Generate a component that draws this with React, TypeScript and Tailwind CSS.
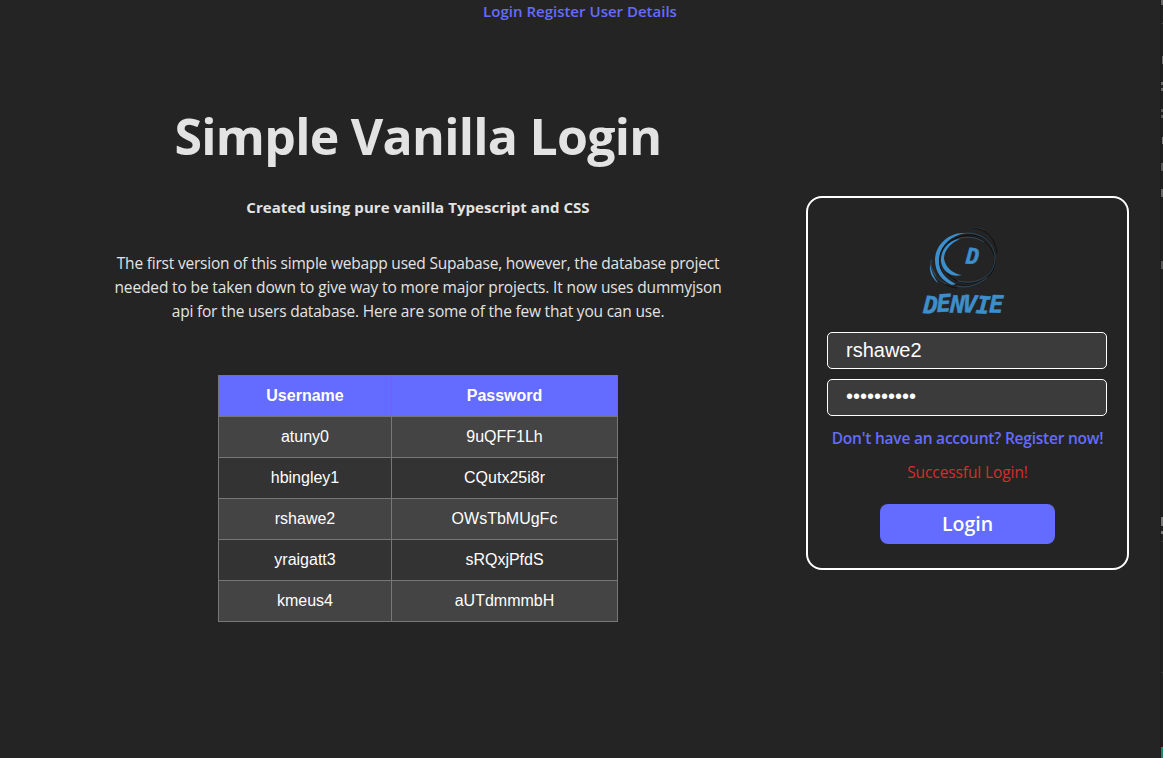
import React from "react";

const users = [
  { username: "atuny0", password: "9uQFF1Lh" },
  { username: "hbingley1", password: "CQutx25i8r" },
  { username: "rshawe2", password: "OWsTbMUgFc" },
  { username: "yraigatt3", password: "sRQxjPfdS" },
  { username: "kmeus4", password: "aUTdmmmbH" },
];

function Logo() {
  return (
    <svg className="mr-[5px] block h-[100px] w-[110px] shrink-0" viewBox="0 0 110 100" fill="none" strokeLinecap="round">
      <g stroke="#0d0f11" strokeWidth="0.9">
        <ellipse cx="57" cy="41" rx="28" ry="25" />
        <ellipse cx="59" cy="39" rx="26" ry="24" transform="rotate(-18 59 39)" />
        <path d="M62 8C75 8 85 17 87 33M22 48C25 59 35 67 47 68" />
      </g>
      <g stroke="#3e6684" strokeWidth="0.6">
        <path d="M47 15C65 8 85 20 85 39C84 56 67 66 48 61" />
        <path d="M38 25C48 15 64 15 74 22" />
        <path d="M21 40C20 52 27 60 36 64M22 48L26 56M47 66C58 69 70 64 77 58" />
        <path d="M61 8C66 7 70 8 74 10" stroke="#2d3d49" />
      </g>
      <g fill="#3d8fcb">
        <path d="M55 13C38 12 25 26 25 40C25 52 32 61 42 65L46 64C35 59 28 50 29 39C30 26 40 16 55 13Z" />
        <path d="M50 19C38 20 30 31 31 42C33 52 42 58 52 55C43 54 36 48 34 39C34 30 41 23 50 19Z" />
        <path d="M20 44C19 53 23 59 28 63C24 57 21 51 20 44Z" />
      </g>
      <g
        fill="#3d8fcb"
        stroke="#3d8fcb"
        strokeWidth="0.5"
        strokeLinejoin="round"
        className="font-['DejaVu_Sans_Mono',monospace] font-bold italic"
      >
        <text x="55.5" y="43.5" fontSize="22" rotate="4">D</text>
        <text x="13 27 40 52 65.5 79" y="93 92 92.5 92 93 92.5" fontSize="24" rotate="3 -3 2 4 4 1">DENVIE</text>
      </g>
    </svg>
  );
}

function LoginCard() {
  return (
    <form
      className="mt-[172px] flex h-[374px] w-[323px] flex-col items-center rounded-2xl border-2 border-white pt-[22px]"
      onSubmit={(e) => e.preventDefault()}
    >
      <Logo />
      <input
        aria-label="Username"
        defaultValue="rshawe2"
        className="mt-3 mr-px h-[37px] w-[280px] shrink-0 rounded-[5px] border border-white bg-[#3b3b3b] px-[18px] font-['Liberation_Sans',sans-serif] text-[20px] text-white outline-none"
      />
      <input
        aria-label="Password"
        type="password"
        defaultValue="OWsTbMUgFc"
        className="mt-2.5 mr-px h-[37px] w-[280px] shrink-0 rounded-[5px] border border-white bg-[#3b3b3b] px-[18px] pb-[3px] font-['Liberation_Sans',sans-serif] text-[20px] text-white outline-none"
      />
      <a
        href="#register"
        className="mt-2.5 text-[15.5px] leading-6 font-semibold tracking-[-0.22px] whitespace-nowrap text-[#646cff]"
      >
        Don't have an account? Register now!
      </a>
      <p className="mt-2.5 text-[15.5px] leading-6 tracking-[-0.1px] whitespace-nowrap text-[#d32f2f]">Successful Login!</p>
      <button className="mt-5 h-10 w-[175px] rounded-lg bg-[#646cff] pb-px text-[19.5px] font-semibold text-white">
        Login
      </button>
    </form>
  );
}

export default function App() {
  return (
    <div className="flex h-[758px] w-full overflow-hidden bg-[#242424] font-['Open_Sans','Noto_Sans',sans-serif] text-[#e3e3e3]">
      <div className="flex w-[1160px] shrink-0 flex-col">
        <nav className="flex h-6 justify-center gap-1 text-[15px] leading-[22px] font-semibold text-[#646cff]">
          <a href="#login">Login</a>
          <a href="#register">Register</a>
          <a href="#user">User Details</a>
        </nav>
        <div className="flex">
          <main className="flex w-[806px] shrink-0 flex-col items-center pl-[30px] text-center">
            <h1 className="mt-[84px] text-[50px] leading-[56px] font-bold tracking-[-0.72px] whitespace-nowrap">
              Simple Vanilla Login
            </h1>
            <h2 className="mt-[31px] text-[15px] leading-6 font-bold tracking-[0.06px] whitespace-nowrap">
              Created using pure vanilla Typescript and CSS
            </h2>
            <p className="mt-8 text-[15.5px] leading-6 tracking-[-0.2px] whitespace-nowrap">
              The first version of this simple webapp used Supabase, however, the database project
              <br />
              <span className="tracking-[-0.14px]">
                needed to be taken down to give way to more major projects. It now uses dummyjson
              </span>
              <br />
              api for the users database. Here are some of the few that you can use.
            </p>
            <table className="mt-[52px] w-[400px] table-fixed border-collapse font-['Liberation_Sans',sans-serif] text-base leading-6 text-white">
              <colgroup>
                <col className="w-[173px]" />
                <col />
              </colgroup>
              <thead>
                <tr className="h-[41px] bg-[#646cff]">
                  <th className="border border-[#777777] p-0">Username</th>
                  <th className="border border-[#777777] p-0">Password</th>
                </tr>
              </thead>
              <tbody>
                {users.map((user) => (
                  <tr key={user.username} className="h-[41px] bg-[#333333] odd:bg-[#444444]">
                    <td className="border border-[#777777] p-0">{user.username}</td>
                    <td className="border border-[#777777] p-0">{user.password}</td>
                  </tr>
                ))}
              </tbody>
            </table>
          </main>
          <LoginCard />
        </div>
      </div>
      <aside className="flex w-[3px] flex-col items-end border-l border-[#1c1c1c] bg-[#202020]">
        <div className="h-[5px] w-0.5 bg-[#666666]" />
        <div className="mt-[18px] h-px w-0.5 bg-[#3a3a3a]" />
        <div className="mt-8 h-2 w-px bg-[#666666]" />
        <div className="mt-[18px] h-[3px] w-0.5 bg-[#666666]" />
        <div className="mt-[3px] h-[3px] w-0.5 bg-[#666666]" />
        <div className="mt-[18px] h-[3px] w-0.5 bg-[#555555]" />
        <div className="mt-[3px] h-[3px] w-0.5 bg-[#555555]" />
        <div className="mt-[19px] h-[7px] w-px bg-[#777777]" />
        <div className="mt-[19px] h-2 w-0.5 bg-[#555555]" />
        <div className="mt-[18px] h-2 w-0.5 bg-[#666666]" />
        <div className="mt-[64px] h-2 w-0.5 bg-[#555555]" />
        <div className="mt-[248px] h-[9px] w-0.5 bg-[#777777]" />
        <div className="mt-[5px] h-[3px] w-0.5 bg-[#777777]" />
        <div className="mt-[7px] h-px w-0.5 bg-[#333333]" />
        <div className="mt-[130px] h-px w-0.5 bg-[#333333]" />
        <div className="mt-auto h-[11px] w-0.5 bg-[#218567]" />
      </aside>
    </div>
  );
}
